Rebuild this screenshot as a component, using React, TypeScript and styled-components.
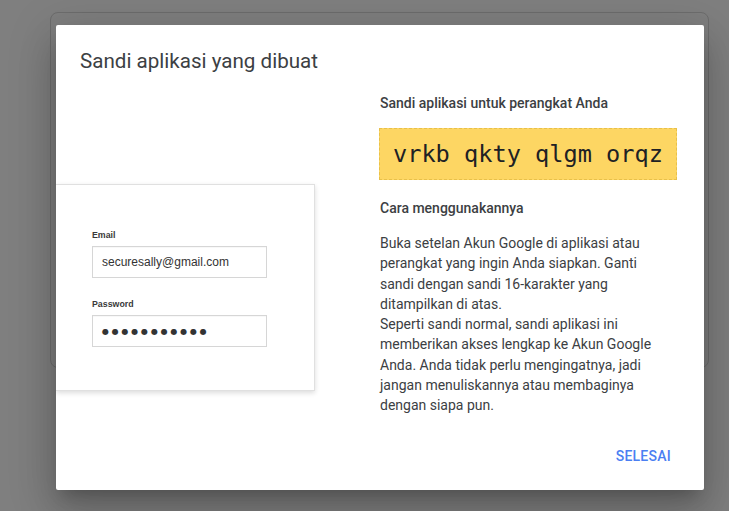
import React from "react";
import styled, { createGlobalStyle } from "styled-components";

const Global = createGlobalStyle`
  html, body { margin: 0; padding: 0; }
  body {
    width: 729px;
    height: 511px;
    overflow: hidden;
    background: #7f7f7f;
    font-family: Roboto, "Noto Sans", Arial, sans-serif;
  }
`;

const Page = styled.div`
  position: relative;
  width: 729px;
  height: 511px;
  box-sizing: border-box;
  padding: 12px 20px 0 50px;
  background: #7f7f7f;
`;

const BackCard = styled.div`
  width: 659px;
  height: 356px;
  box-sizing: border-box;
  border: 1px solid #6d6d6d;
  border-radius: 8px;
  background: #7f7f7f;
`;

const Dialog = styled.div`
  position: absolute;
  left: 56px;
  top: 25px;
  width: 648px;
  height: 465px;
  box-sizing: border-box;
  background: #fff;
  border-radius: 2px;
  overflow: hidden;
  display: flex;
  flex-direction: column;
  box-shadow: 0 11px 15px -7px rgba(0, 0, 0, 0.2),
    0 24px 38px 3px rgba(0, 0, 0, 0.14), 0 9px 46px 8px rgba(0, 0, 0, 0.12);
`;

const Title = styled.h2`
  margin: 0;
  padding: 22px 24px 0 24px;
  font-family: Roboto, sans-serif;
  font-weight: 400;
  font-size: 20.6px;
  line-height: 28px;
  color: #3c4043;
`;

const Body = styled.div`
  display: flex;
  margin-top: 18px;
`;

const LeftCol = styled.div`
  width: 324px;
  flex: none;
`;

const FormCard = styled.div`
  margin-top: 91px;
  width: 259px;
  height: 207px;
  box-sizing: border-box;
  background: #fff;
  border: 1px solid #e0e0e0;
  border-left: none;
  box-shadow: 0 2px 5px rgba(0, 0, 0, 0.14);
  padding: 45px 0 0 36px;
  font-family: "Liberation Sans", Arial, sans-serif;
`;

const FieldLabel = styled.div`
  font-size: 8.8px;
  font-weight: 700;
  color: #3a3a3a;
  line-height: 10px;
  margin-bottom: 6px;
`;

const FieldBox = styled.div<{ $gap?: number }>`
  width: 175px;
  height: 32px;
  box-sizing: border-box;
  border: 1px solid #d6d6d6;
  box-shadow: inset 0 1px 1px rgba(0, 0, 0, 0.03);
  display: flex;
  align-items: center;
  padding-left: 9px;
  margin-bottom: ${(p) => p.$gap ?? 0}px;
  font-size: 12px;
  color: #333;
`;

const Dots = styled.span`
  font-family: "DejaVu Sans", sans-serif;
  font-size: 8px;
  letter-spacing: 2.8px;
  color: #333;
`;

const RightCol = styled.div`
  width: 300px;
  flex: none;
`;

const Heading = styled.div<{ $mt?: number }>`
  font-size: 14px;
  font-weight: 500;
  line-height: 20px;
  color: #3c4043;
  margin-top: ${(p) => p.$mt ?? 0}px;
`;

const PassBox = styled.div`
  margin-top: 15px;
  width: 298px;
  height: 52px;
  box-sizing: border-box;
  margin-left: -1px;
  background: #fdd663;
  border: 1px dashed #e8c04a;
  display: flex;
  align-items: center;
  padding-left: 13px;
  font-family: "DejaVu Sans Mono", "Liberation Mono", monospace;
  font-size: 23.6px;
  color: #202124;
`;

const Paragraph = styled.p`
  margin: 15px 0 0 0;
  width: 290px;
  font-size: 14px;
  line-height: 20.25px;
  color: #3c4043;
`;

const Actions = styled.div`
  margin-top: auto;
  display: flex;
  justify-content: flex-end;
  padding: 0 25px 16px 0;
`;

const TextButton = styled.button`
  height: 36px;
  padding: 0 8px;
  border: none;
  background: transparent;
  font-family: Roboto, sans-serif;
  font-size: 14px;
  font-weight: 500;
  letter-spacing: 0.25px;
  color: #4b7ff2;
  text-transform: uppercase;
  cursor: pointer;
`;

export default function App() {
  return (
    <>
      <Global />
      <Page>
        <BackCard />
        <Dialog>
          <Title>Sandi aplikasi yang dibuat</Title>
          <Body>
            <LeftCol>
              <FormCard>
                <FieldLabel>Email</FieldLabel>
                <FieldBox $gap={21}>securesally@gmail.com</FieldBox>
                <FieldLabel>Password</FieldLabel>
                <FieldBox>
                  <Dots>●●●●●●●●●●●</Dots>
                </FieldBox>
              </FormCard>
            </LeftCol>
            <RightCol>
              <Heading>Sandi aplikasi untuk perangkat Anda</Heading>
              <PassBox>vrkb qkty qlgm orqz</PassBox>
              <Heading $mt={18}>Cara menggunakannya</Heading>
              <Paragraph>
                Buka setelan Akun Google di aplikasi atau perangkat yang ingin
                Anda siapkan. Ganti sandi dengan sandi 16-karakter yang
                ditampilkan di atas.
                <br />
                Seperti sandi normal, sandi aplikasi ini memberikan akses
                lengkap ke Akun Google Anda. Anda tidak perlu mengingatnya, jadi
                jangan menuliskannya atau membaginya dengan siapa pun.
              </Paragraph>
            </RightCol>
          </Body>
          <Actions>
            <TextButton>Selesai</TextButton>
          </Actions>
        </Dialog>
      </Page>
    </>
  );
}
